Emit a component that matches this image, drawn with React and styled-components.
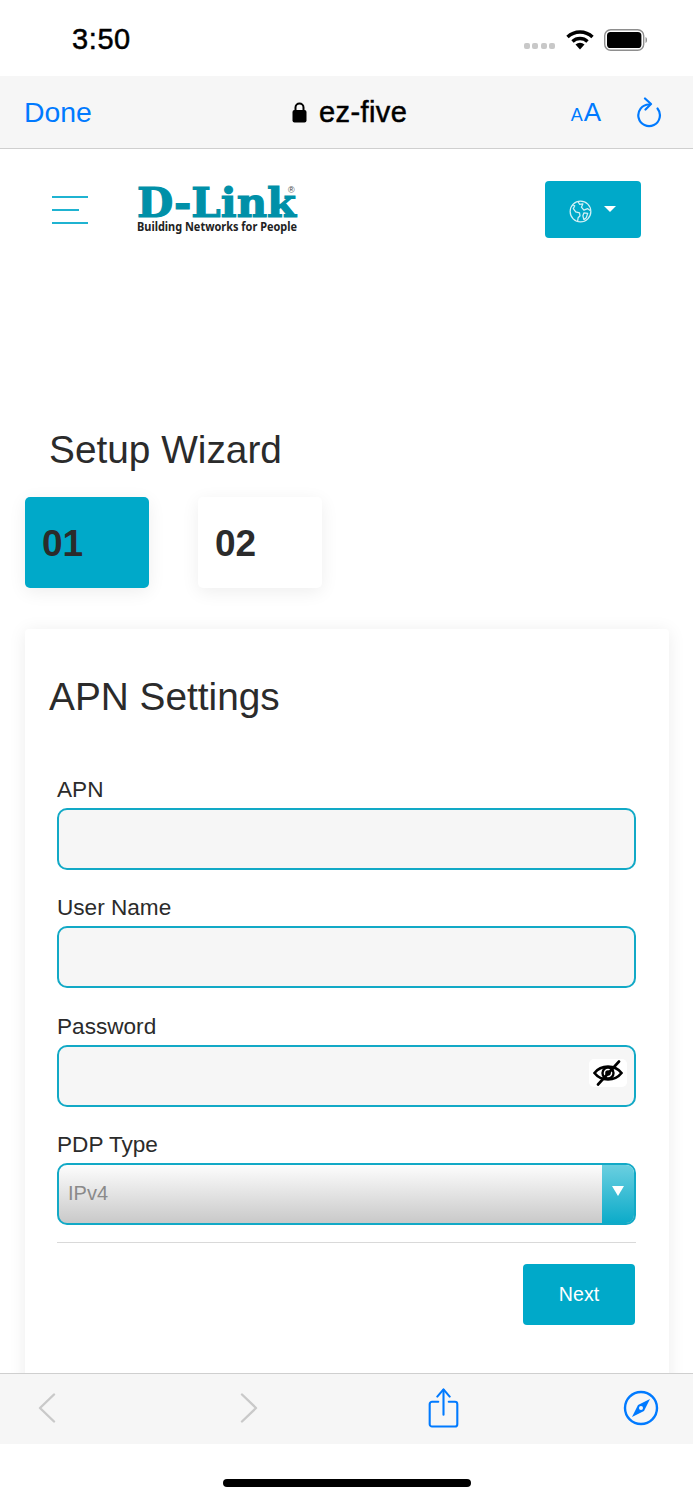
import React from 'react';
import styled, {createGlobalStyle} from 'styled-components';

const GlobalStyle = createGlobalStyle`
    html, body {
        margin: 0;
        padding: 0;
        background: #fff;
    }
    * {
        box-sizing: border-box;
    }
`;

const Phone = styled.div`
    width: 693px;
    height: 1500px;
    display: flex;
    flex-direction: column;
    overflow: hidden;
    background: #fff;
    color: #2b2b2b;
    font-family: "Liberation Sans", Arial, sans-serif;
`;

const StatusBar = styled.div`
    height: 76px;
    flex: none;
    display: flex;
    align-items: center;
    justify-content: space-between;
    padding: 3px 45px 0 72px;
`;

const Clock = styled.div`
    font-size: 29px;
    font-weight: 500;
    color: #000;
    letter-spacing: 0.6px;
    -webkit-text-stroke: 0.5px #000;
`;

const StatusIcons = styled.div`
    display: flex;
    align-items: center;
    gap: 10px;
`;

const SignalDots = styled.div`
    display: flex;
    gap: 2.500px;
    margin-top: 12px;
    margin-right: 1px;
`;

const Dot = styled.span`
    width: 6px;
    height: 6px;
    border-radius: 2px;
    background: #c8c8c8;
`;

const BrowserBar = styled.div`
    height: 73px;
    flex: none;
    display: flex;
    align-items: center;
    justify-content: space-between;
    padding: 0 31px 0 24px;
    background: #f6f6f6;
    border-bottom: 1px solid #cfcfcf;
    position: relative;
`;

const DoneLink = styled.div`
    color: #007aff;
    font-size: 28.400px;
`;

const Address = styled.div`
    position: absolute;
    left: 292px;
    top: 0;
    height: 72px;
    display: flex;
    align-items: center;
    gap: 12px;
    font-size: 29px;
    letter-spacing: 0.4px;
    color: #000;
    -webkit-text-stroke: 0.5px #000;
`;

const BarActions = styled.div`
    display: flex;
    align-items: center;
    gap: 36px;
`;

const TextSize = styled.div`
    color: #007aff;
    display: flex;
    align-items: baseline;
    gap: 1px;
    font-size: 26px;
`;

const SmallA = styled.span`
    font-size: 18px;
`;

const Content = styled.div`
    flex: 1;
    min-height: 0;
    overflow: hidden;
    background: #fff;
`;

const NavRow = styled.div`
    display: flex;
    align-items: flex-start;
    padding: 32px 52px 0 52px;
    height: 279px;
`;

const Burger = styled.div`
    width: 36px;
    height: 28px;
    margin-top: 15px;
    display: flex;
    flex-direction: column;
    justify-content: space-between;
`;

const BurgerLine = styled.span`
    height: 1.600px;
    background: #1fb3d1;
    width: ${p => p.$short ? '27px' : '36px'};
`;

const LogoWrap = styled.div`
    margin-left: 48px;
    margin-top: 4px;
    width: 162px;
    height: 50px;

    svg {
        overflow: visible;
    }
`;

const LangButton = styled.div`
    margin-left: auto;
    width: 96px;
    height: 57px;
    border-radius: 4px;
    background: #00a9c9;
    display: flex;
    align-items: center;
    justify-content: center;
    gap: 12px;
    padding-top: 4px;
    padding-right: 2px;
`;

const Caret = styled.span`
    width: 0;
    height: 0;
    border-left: 6px solid transparent;
    border-right: 6px solid transparent;
    border-top: 6px solid #fff;
    margin-bottom: 6px;
`;

const Heading = styled.h2`
    margin: 0;
    font-size: 38.800px;
    line-height: 44px;
    font-weight: 400;
    color: #2b2b2b;
`;

const PageHeading = styled(Heading)`
    padding-left: 49px;
    height: 69px;
`;

const Steps = styled.div`
    display: flex;
    gap: 49px;
    padding-left: 25px;
`;

const Step = styled.div`
    width: 124px;
    height: 91px;
    border-radius: 5px;
    background: ${p => p.$active ? '#00a9c9' : '#fff'};
    box-shadow: 0 4px 18px rgba(0, 0, 0, 0.07);
    display: flex;
    align-items: center;
    padding: 3px 0 0 17px;
    font-size: 37px;
    font-weight: 700;
    color: #2b2b2b;
`;

const Card = styled.div`
    margin: 41px 24px 0 25px;
    padding: 46px 33px 80px 32px;
    background: #fff;
    border-radius: 4px;
    box-shadow: 0 2px 18px rgba(0, 0, 0, 0.08);
`;

const CardHeading = styled(Heading)`
    margin-left: -8px;
    margin-bottom: 53px;
`;

const Field = styled.div`
    margin-bottom: 20.300px;
`;

const Label = styled.div`
    font-size: 22.600px;
    line-height: 36px;
    color: #2b2b2b;
`;

const InputBox = styled.div`
    height: 62px;
    border: 2px solid #12a9c6;
    border-radius: 10px;
    background: #f6f6f6;
    display: flex;
    align-items: center;
    justify-content: flex-end;
    padding: 0 7px 5px 0;
`;

const EyeChip = styled.div`
    width: 38px;
    height: 28px;
    border-radius: 5px;
    background: #fff;
    display: flex;
    align-items: center;
    justify-content: center;
`;

const SelectBox = styled.div`
    height: 62px;
    border: 2px solid #12a9c6;
    border-radius: 10px;
    background: linear-gradient(#fdfdfd, #c9c9c9);
    display: flex;
    align-items: stretch;
    overflow: hidden;
`;

const SelectValue = styled.div`
    flex: 1;
    display: flex;
    align-items: center;
    padding-left: 9px;
    font-size: 20px;
    color: #8a8a8a;
`;

const SelectArrow = styled.div`
    width: 32px;
    background: linear-gradient(#6acfe0, #0cabc9);
    display: flex;
    align-items: center;
    justify-content: center;
`;

const ArrowGlyph = styled.span`
    width: 0;
    height: 0;
    border-left: 6px solid transparent;
    border-right: 6px solid transparent;
    border-top: 10px solid #fff;
    margin-bottom: 5px;
`;

const Footer = styled.div`
    margin-top: -3.300px;
    border-top: 1px solid #d9d9d9;
    padding-top: 21px;
    display: flex;
    justify-content: flex-end;
`;

const NextButton = styled.div`
    width: 112px;
    height: 61px;
    margin-right: 1px;
    border-radius: 4px;
    background: #00a9c9;
    color: #fff;
    font-size: 19.600px;
    display: flex;
    align-items: center;
    justify-content: center;
`;

const BottomBar = styled.div`
    height: 71px;
    flex: none;
    display: grid;
    grid-template-columns: 202px 188px 195px auto;
    align-items: center;
    background: #f6f6f6;
    border-top: 1px solid #cfcfcf;
    padding: 0 0 2px 38px;
`;

const ToolSlot = styled.div`
    display: flex;
`;

const HomeArea = styled.div`
    height: 56px;
    flex: none;
    display: flex;
    justify-content: center;
    padding-top: 35px;
`;

const HomeBar = styled.div`
    width: 248px;
    height: 8px;
    border-radius: 4px;
    background: #000;
`;

function WifiIcon() {
    return (
        <svg width="28" height="22" viewBox="0 0 28 22">
            <path d="M1.5 8 A18 18 0 0 1 26.500 8" fill="none" stroke="#000" strokeWidth="3.400"/>
            <path d="M6.500 12.500 A11 11 0 0 1 21.500 12.500" fill="none" stroke="#000" strokeWidth="3.400"/>
            <path d="M9.500 15.500 A7 7 0 0 1 18.500 15.500 L14 20.500 Z" fill="#000"/>
        </svg>
    );
}

function BatteryIcon() {
    return (
        <svg width="44" height="22" viewBox="0 0 44 22">
            <rect x="0.700" y="0.700" width="39" height="20.600" rx="6" fill="none" stroke="#8e8e8e" strokeWidth="1.400"/>
            <rect x="3" y="3" width="34.400" height="16" rx="3.600" fill="#000"/>
            <path d="M41.500 8 C43.500 8.500 43.500 13.500 41.500 14 Z" fill="#8e8e8e"/>
        </svg>
    );
}

function LockIcon() {
    return (
        <svg width="15" height="22" viewBox="0 0 15 22">
            <path d="M3.500 10 V6.500 a4 4 0 0 1 8 0 V10" fill="none" stroke="#000" strokeWidth="2"/>
            <rect x="0.500" y="9" width="14" height="12.500" rx="2" fill="#000"/>
        </svg>
    );
}

function ReloadIcon() {
    return (
        <svg width="25" height="31" viewBox="0 0 25 31">
            <path d="M12 7.500 A10.800 10.800 0 1 0 20.500 11.500" fill="none" stroke="#007aff" strokeWidth="2.200" strokeLinecap="round"/>
            <path d="M8 1.500 L14 7 L8.500 12.500" fill="none" stroke="#007aff" strokeWidth="2.200" strokeLinecap="round" strokeLinejoin="round"/>
        </svg>
    );
}

function DlinkLogo() {
    return (
        <svg width="162" height="50" viewBox="0 0 162 50">
            <text
                x="1"
                y="32"
                textLength="159"
                lengthAdjust="spacingAndGlyphs"
                fontFamily="'DejaVu Serif', serif"
                fontWeight="700"
                fontSize="41"
                fill="#0090a8"
                stroke="#0090a8"
                strokeWidth="1.200"
            >D-Link</text>
            <text x="152" y="8" fontFamily="'Liberation Sans', sans-serif" fontSize="9" fill="#444">®</text>
            <text
                x="1"
                y="46"
                textLength="160"
                lengthAdjust="spacingAndGlyphs"
                fontFamily="'Noto Sans', sans-serif"
                fontWeight="700"
                fontSize="12.500"
                fill="#222"
            >Building Networks for People</text>
        </svg>
    );
}

function GlobeIcon() {
    return (
        <svg width="23" height="23" viewBox="0 0 24 24" fill="none" stroke="#d4f1f6" strokeWidth="1.300" strokeLinejoin="round">
            <circle cx="12" cy="12" r="10.800"/>
            <path d="M3.500 5 L6 6 L4.500 9 L7 12.500 L11 13.500 L11.500 16.500 L9.500 18.500 L9 22"/>
            <path d="M9.500 1.800 L11 4.500 L14.500 4 L13 7.500 L15.500 10.500 L19.500 9 L22 11"/>
            <path d="M15.500 13.500 L19.500 14 L18 18.500 L15.500 20.500 L14.500 16.500 Z"/>
        </svg>
    );
}

function EyeOffIcon() {
    return (
        <svg width="30" height="26" viewBox="0 0 30 26" fill="none" stroke="#000">
            <path d="M1.500 13 C8 4.500 22 4.500 28.500 13 C22 21.500 8 21.500 1.500 13 Z" strokeWidth="2.600"/>
            <circle cx="15" cy="13" r="5.500" strokeWidth="2.400"/>
            <circle cx="15" cy="13" r="2.800" fill="#000" stroke="none"/>
            <path d="M5 24.500 L26 1.500" strokeWidth="2.600" strokeLinecap="round"/>
        </svg>
    );
}

function ChevronIcon({flip}) {
    return (
        <svg width="18" height="30" viewBox="0 0 18 30">
            <path d={flip ? 'M2 1.500 L16 15 L2 28.500' : 'M16 1.500 L2 15 L16 28.500'} fill="none" stroke="#c9c9c9" strokeWidth="2.400" strokeLinecap="round" strokeLinejoin="round"/>
        </svg>
    );
}

function ShareIcon() {
    return (
        <svg width="31" height="40" viewBox="0 0 32 42" fill="none" stroke="#007aff" strokeWidth="2.200" strokeLinecap="round" strokeLinejoin="round">
            <path d="M10.500 14.500 H4 a2.500 2.500 0 0 0 -2.500 2.500 V38 a2.500 2.500 0 0 0 2.500 2.500 H28 a2.500 2.500 0 0 0 2.500 -2.500 V17 a2.500 2.500 0 0 0 -2.500 -2.500 H21.500"/>
            <path d="M16 28 V2"/>
            <path d="M9.500 9 L16 1.500 L22.500 9"/>
        </svg>
    );
}

function CompassIcon() {
    return (
        <svg width="36" height="36" viewBox="0 0 36 36">
            <circle cx="18" cy="18" r="16" fill="none" stroke="#007aff" strokeWidth="2.400"/>
            <path d="M27 9 L21 21 L9 27 L15 15 Z" fill="#007aff"/>
            <circle cx="18" cy="18" r="2" fill="#f6f6f6"/>
        </svg>
    );
}

function App() {
    return (
        <Phone>
            <GlobalStyle/>
            <StatusBar>
                <Clock>3:50</Clock>
                <StatusIcons>
                    <SignalDots>
                        <Dot/><Dot/><Dot/><Dot/>
                    </SignalDots>
                    <WifiIcon/>
                    <BatteryIcon/>
                </StatusIcons>
            </StatusBar>
            <BrowserBar>
                <DoneLink>Done</DoneLink>
                <Address>
                    <LockIcon/>
                    <span>ez-five</span>
                </Address>
                <BarActions>
                    <TextSize><SmallA>A</SmallA>A</TextSize>
                    <ReloadIcon/>
                </BarActions>
            </BrowserBar>
            <Content>
                <NavRow>
                    <Burger>
                        <BurgerLine/>
                        <BurgerLine $short/>
                        <BurgerLine/>
                    </Burger>
                    <LogoWrap>
                        <DlinkLogo/>
                    </LogoWrap>
                    <LangButton>
                        <GlobeIcon/>
                        <Caret/>
                    </LangButton>
                </NavRow>
                <PageHeading>Setup Wizard</PageHeading>
                <Steps>
                    <Step $active>01</Step>
                    <Step>02</Step>
                </Steps>
                <Card>
                    <CardHeading>APN Settings</CardHeading>
                    <Field>
                        <Label>APN</Label>
                        <InputBox/>
                    </Field>
                    <Field>
                        <Label>User Name</Label>
                        <InputBox/>
                    </Field>
                    <Field>
                        <Label>Password</Label>
                        <InputBox>
                            <EyeChip><EyeOffIcon/></EyeChip>
                        </InputBox>
                    </Field>
                    <Field>
                        <Label>PDP Type</Label>
                        <SelectBox>
                            <SelectValue>IPv4</SelectValue>
                            <SelectArrow><ArrowGlyph/></SelectArrow>
                        </SelectBox>
                    </Field>
                    <Footer>
                        <NextButton>Next</NextButton>
                    </Footer>
                </Card>
            </Content>
            <BottomBar>
                <ToolSlot><ChevronIcon/></ToolSlot>
                <ToolSlot><ChevronIcon flip/></ToolSlot>
                <ToolSlot><ShareIcon/></ToolSlot>
                <ToolSlot><CompassIcon/></ToolSlot>
            </BottomBar>
            <HomeArea>
                <HomeBar/>
            </HomeArea>
        </Phone>
    );
}

export default App;
